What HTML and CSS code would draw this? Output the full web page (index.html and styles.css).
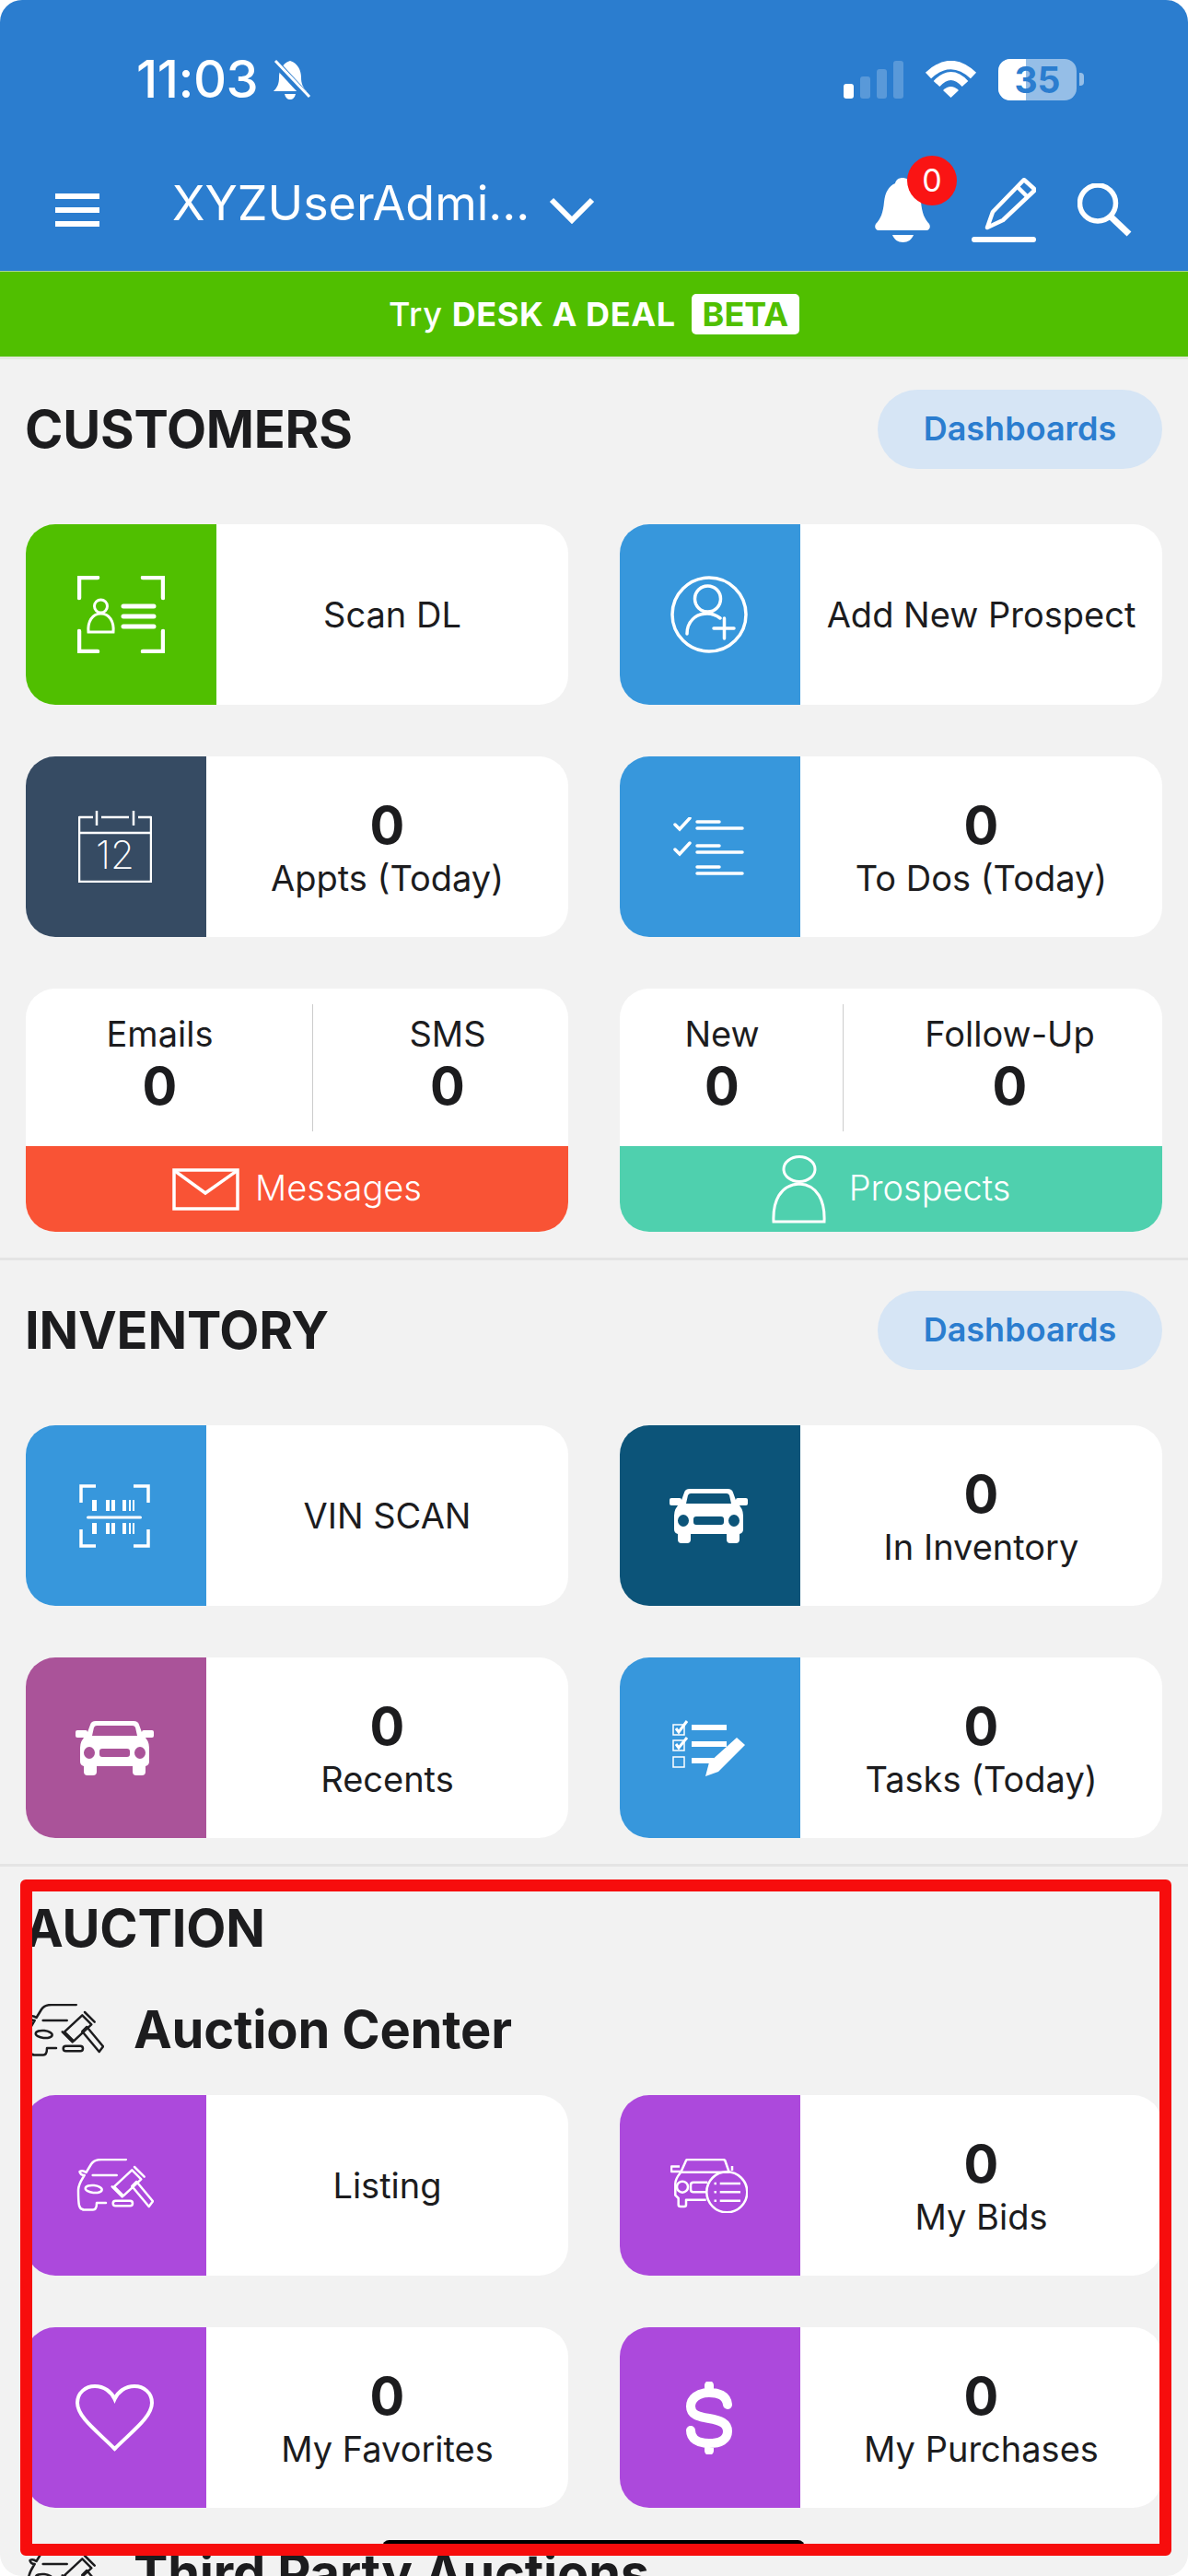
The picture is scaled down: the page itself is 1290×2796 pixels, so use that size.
FILE: index.html
```html
<!DOCTYPE html>
<html>
<head>
 <title>Dealer Home</title>
 <meta charset="utf-8">
 <link rel="stylesheet" href="styles.css">
</head>
<body>
<svg class="defs" width="0" height="0">
	<symbol id="car" viewBox="0 0 85 59">
		<rect x="0" y="10" width="13" height="8" rx="2"/>
		<rect x="72" y="10" width="13" height="8" rx="2"/>
		<path fill-rule="evenodd" d="M22 0H63Q68 0 69 4L73 15Q80 21 80 29V44Q80 48 76 49V55Q76 59 72 59H66Q62 59 62 55V49H23V55Q23 59 19 59H13Q9 59 9 55V49Q5 48 5 44V29Q5 21 12 15L16 4Q17 0 22 0ZM23 5Q21 5 20 7L18 16H67L65 7Q64 5 62 5ZM15 28A6 6.500 0 1 0 15 41A6 6.500 0 1 0 15 28ZM70 28A6 6.500 0 1 0 70 41A6 6.500 0 1 0 70 28ZM29 30Q26 30 26 33V36Q26 39 29 39H56Q59 39 59 36V33Q59 30 56 30Z"/>
	</symbol>
	<symbol id="gavel-car" viewBox="0 0 85 58">
		<g fill="none" stroke="currentColor" stroke-width="2.500" stroke-linejoin="round" stroke-linecap="round">
			<path d="M54.700 1H28C22 1 19 3 17 6L11.500 15C9 13 6 13 4.500 14C5 17 7 18 9.700 18C6 24 3 28 3 34C3 41 3 47 4 51C5 54 7 55 8 55V55.500H19C22 55.500 23 53 23 48H33"/>
			<path d="M18.700 18H44.700"/>
			<ellipse cx="19.700" cy="33" rx="9" ry="4" transform="rotate(6 19.700 33)"/>
			<rect x="40.700" y="45.700" width="21.300" height="5.600" rx="2.800"/>
			<path d="M61.300 12.300L71.300 22.300L52 40.300L42 30.300Z"/>
			<path d="M64 9L74.700 19.700M39.700 30.300L50.700 41.300"/>
			<path d="M61.300 30L66.300 25L84 46.300L79.700 52Z"/>
		</g>
	</symbol>
</svg>

<div class="screen">

<div class="topbar">
	<div class="status_row">
		<span class="clock">11:03</span>
		<svg class="bell_off" width="44" height="44" viewBox="0 0 44 44">
			<path fill="#fff" d="M21 2C12 5 9 13 9 20C9 27 7 31 3 35H39C35 31 33 27 33 20C33 13 30 5 21 2ZM15 38H27C26 42 24 44 21 44C18 44 16 42 15 38Z"/>
			<path d="M4 3L40 42" stroke="#2B7DCF" stroke-width="8"/>
			<path d="M5 2L42 41" stroke="#fff" stroke-width="3"/>
		</svg>
		<div class="status_icons">
			<svg width="65" height="41" viewBox="0 0 65 41">
				<rect x="0" y="25" width="11" height="16" rx="3" fill="#fff"/>
				<rect x="18" y="17" width="11" height="24" rx="3" fill="#fff" opacity=".22"/>
				<rect x="36" y="9" width="11" height="32" rx="3" fill="#fff" opacity=".22"/>
				<rect x="54" y="0" width="11" height="41" rx="3" fill="#fff" opacity=".22"/>
			</svg>
			<svg width="57" height="40" viewBox="0 0 57 40">
				<g fill="none" stroke="#fff" stroke-width="9">
					<path d="M4 16Q28.500 -7 53 16"/>
					<path d="M13 25Q28.500 8 44 25"/>
				</g>
				<path fill="#fff" d="M28.500 40L20 32Q28.500 24 37 32Z"/>
			</svg>
			<div class="battery"><span class="battery_fill"></span><span class="battery_num">35</span></div>
		</div>
	</div>
	<div class="nav_row">
		<div class="burger"><span></span><span></span><span></span></div>
		<span class="account">XYZUserAdmi...</span>
		<svg class="chevron" width="50" height="29" viewBox="0 0 50 29"><path d="M3 3L25 25L47 3" fill="none" stroke="#fff" stroke-width="6"/></svg>
		<div class="nav_icons">
			<div class="notify">
				<svg width="60" height="70" viewBox="0 0 60 70">
					<path fill="#fff" d="M30 0C34 0 37 2 38 6C45 9 49 16 50 26C51 38 54 45 59 50C61 54 59 57 56 57H4C1 57 -1 54 1 50C6 45 9 38 10 26C11 16 15 9 22 6C23 2 26 0 30 0ZM19 62H42C40 67 36 70 30.500 70C25 70 21 67 19 62Z"/>
				</svg>
				<span class="badge">0</span>
			</div>
			<svg width="70" height="70" viewBox="0 0 70 70">
				<g fill="none" stroke="#fff" stroke-width="4.500" stroke-linejoin="round">
					<path d="M58 3L68 12Q69 13 68 14L34 46L17 54L23 37L56 3Q57 2 58 3Z"/>
					<path d="M50 10L62 22"/>
				</g>
				<rect x="0" y="64" width="70" height="6" rx="3" fill="#fff"/>
			</svg>
			<svg width="60" height="58" viewBox="0 0 60 58">
				<circle cx="22" cy="21.500" r="19.500" fill="none" stroke="#fff" stroke-width="5.500"/>
				<path d="M37 37L56 55" stroke="#fff" stroke-width="7"/>
			</svg>
		</div>
	</div>
</div>

<div class="promo">
	<span class="promo_text">Try <b>DESK A DEAL</b></span>
	<span class="promo_tag">BETA</span>
</div>

<div class="section">
	<div class="section_head">
		<h2 class="section_title">CUSTOMERS</h2>
		<span class="pill">Dashboards</span>
	</div>
	<div class="tiles">
		<div class="tile">
			<div class="tile_icon bg_green wide">
				<svg width="95" height="84" viewBox="0 0 95 84">
					<g fill="none" stroke="#fff" stroke-width="4.500" stroke-linecap="round">
						<path d="M2 24V2H22M71 2H93V24M2 60V82H22M71 82H93V60"/>
						<path d="M50 33H83M50 44H83M50 55H83" stroke-width="5"/>
					</g>
					<g fill="none" stroke="#fff" stroke-width="3">
						<circle cx="25.500" cy="33" r="7"/>
						<path d="M12 61H39C40 50 35 41 25.500 41C16 41 11 50 12 61Z"/>
					</g>
				</svg>
			</div>
			<div class="tile_body solo"><span class="label">Scan DL</span></div>
		</div>
		<div class="tile">
			<div class="tile_icon bg_blue">
				<svg width="84" height="84" viewBox="0 0 84 84">
					<g fill="none" stroke="#fff" stroke-width="3.500" stroke-linecap="round">
						<circle cx="42" cy="42" r="40"/>
						<circle cx="40.500" cy="25" r="14"/>
						<path d="M18 63C18 50 27 41 40 41C46 41 50 43 54 46"/>
						<path d="M47 57H69M58.500 46V68"/>
					</g>
				</svg>
			</div>
			<div class="tile_body solo"><span class="label">Add New Prospect</span></div>
		</div>
		<div class="tile">
			<div class="tile_icon bg_slate">
				<svg width="80" height="78" viewBox="0 0 80 78">
					<g fill="none" stroke="#fff" stroke-width="2.500" stroke-linejoin="round">
						<path d="M16 7H1V77H79V7H65"/>
						<path d="M1 24H79M25 7H55M20 0V16M60 0V16"/>
					</g>
					<text class="cal_day" x="40" y="63" text-anchor="middle">12</text>
				</svg>
			</div>
			<div class="tile_body"><b class="count">0</b><span class="label">Appts (Today)</span></div>
		</div>
		<div class="tile">
			<div class="tile_icon bg_blue">
				<svg width="77" height="64" viewBox="0 0 77 64">
					<g fill="none" stroke="#fff" stroke-width="3.500" stroke-linecap="round">
						<path d="M2 8L7 13L18 1M2 35L7 40L18 28"/>
						<path d="M26 5H50M26 12H75M26 31H50M26 38H75M26 54H50M26 61H75"/>
					</g>
				</svg>
			</div>
			<div class="tile_body"><b class="count">0</b><span class="label">To Dos (Today)</span></div>
		</div>
		<div class="stat_card">
			<div class="stat_top split_msg">
				<div class="stat_cell"><span class="label">Emails</span><b class="count">0</b></div>
				<div class="stat_cell"><span class="label">SMS</span><b class="count">0</b></div>
			</div>
			<div class="stat_foot bg_coral gap_msg">
				<svg width="73" height="46" viewBox="0 0 73 46">
					<g fill="none" stroke="#fff" stroke-width="3.500">
						<rect x="2" y="2" width="69" height="42"/>
						<path d="M3 3L36 27L70 3"/>
					</g>
				</svg>
				<span class="foot_text">Messages</span>
			</div>
		</div>
		<div class="stat_card">
			<div class="stat_top split_pro">
				<div class="stat_cell"><span class="label">New</span><b class="count">0</b></div>
				<div class="stat_cell"><span class="label">Follow-Up</span><b class="count">0</b></div>
			</div>
			<div class="stat_foot bg_mint gap_pro">
				<svg width="59" height="74" viewBox="0 0 59 74">
					<g fill="none" stroke="#fff" stroke-width="3">
						<ellipse cx="30" cy="15" rx="17" ry="13.500"/>
						<path d="M2 72C1 50 9 32 30 31C50 32 58 50 57 72Z"/>
					</g>
				</svg>
				<span class="foot_text">Prospects</span>
			</div>
		</div>
	</div>
</div>

<div class="section">
	<div class="section_head">
		<h2 class="section_title">INVENTORY</h2>
		<span class="pill">Dashboards</span>
	</div>
	<div class="tiles">
		<div class="tile">
			<div class="tile_icon bg_blue">
				<svg width="77" height="69" viewBox="0 0 77 69" fill="#fff">
					<path fill="none" stroke="#fff" stroke-width="3.500" d="M2 20V2H18M59 2H75V20M2 49V67H18M59 67H75V49"/>
					<rect x="8" y="34.500" width="60" height="3" rx="1.500"/>
					<g>
						<rect x="14" y="17" width="5" height="12"/>
						<rect x="29" y="17" width="4" height="12"/>
						<rect x="35" y="17" width="4" height="12"/>
						<rect x="47" y="17" width="4" height="12"/>
						<rect x="54" y="17" width="2" height="12"/>
						<rect x="58" y="17" width="2" height="12"/>
						<rect x="14" y="42" width="5" height="12"/>
						<rect x="29" y="42" width="4" height="12"/>
						<rect x="35" y="42" width="4" height="12"/>
						<rect x="47" y="42" width="4" height="12"/>
						<rect x="54" y="42" width="2" height="12"/>
						<rect x="58" y="42" width="2" height="12"/>
					</g>
				</svg>
			</div>
			<div class="tile_body solo"><span class="label">VIN SCAN</span></div>
		</div>
		<div class="tile">
			<div class="tile_icon bg_teal">
				<svg class="solid" width="85" height="59"><use href="#car"/></svg>
			</div>
			<div class="tile_body"><b class="count">0</b><span class="label">In Inventory</span></div>
		</div>
		<div class="tile">
			<div class="tile_icon bg_plum">
				<svg class="solid" width="85" height="59"><use href="#car"/></svg>
			</div>
			<div class="tile_body"><b class="count">0</b><span class="label">Recents</span></div>
		</div>
		<div class="tile">
			<div class="tile_icon bg_blue">
				<svg width="79" height="61" viewBox="0 0 79 61">
					<g fill="none" stroke="#fff" stroke-width="1.500">
						<rect x="1" y="5" width="12" height="11"/>
						<rect x="1" y="22" width="12" height="11"/>
						<rect x="1" y="40" width="12" height="11"/>
					</g>
					<path d="M4 9L7 13L16 1M4 26L7 30L16 19" fill="none" stroke="#fff" stroke-width="3"/>
					<rect x="21" y="5" width="38" height="6" fill="#fff"/>
					<rect x="21" y="23" width="38" height="6" fill="#fff"/>
					<rect x="21" y="41" width="24" height="6" fill="#fff"/>
					<path fill="#fff" d="M70 19L79 27L50 56L36 61L40 46Z"/>
				</svg>
			</div>
			<div class="tile_body"><b class="count">0</b><span class="label">Tasks (Today)</span></div>
		</div>
	</div>
</div>

<div class="auction">
	<h2 class="section_title auction_title">AUCTION</h2>
	<div class="sub_head">
		<svg class="sub_icon" width="85" height="58"><use href="#gavel-car"/></svg>
		<h3 class="sub_title">Auction Center</h3>
	</div>
	<div class="tiles">
		<div class="tile">
			<div class="tile_icon bg_violet">
				<svg class="light" width="85" height="58"><use href="#gavel-car"/></svg>
			</div>
			<div class="tile_body solo"><span class="label">Listing</span></div>
		</div>
		<div class="tile">
			<div class="tile_icon bg_violet">
				<svg width="84" height="59" viewBox="0 0 84 59">
					<g fill="none" stroke="#fff" stroke-width="2.500" stroke-linejoin="round">
						<path d="M11.300 14.700L17 2Q17.500 1 19 1H57Q58.500 1 59.300 2L63.700 14.700M11.300 14.700H63.700"/>
						<path d="M11 14H1V8.500H10"/>
						<path d="M67 8V13"/>
						<path d="M11.300 14.700C8 19 5.300 22 5.300 27V39.700L8.700 43V50Q8.700 52 11 52H15Q17 52 17 50V44.700H38.700"/>
						<circle cx="13" cy="30.700" r="6"/>
						<path d="M40.300 25.700H25Q22 25.700 22 28.500V33.500Q22 36.300 25 36.300H39"/>
						<circle cx="61.300" cy="36.300" r="22"/>
						<path d="M53.700 27H76M53.700 36.300H76M53.700 45.700H76"/>
						<path d="M47.500 27H50M47.500 36.300H50M47.500 45.700H50"/>
					</g>
				</svg>
			</div>
			<div class="tile_body"><b class="count">0</b><span class="label">My Bids</span></div>
		</div>
		<div class="tile">
			<div class="tile_icon bg_violet">
				<svg width="85" height="73" viewBox="0 0 85 73">
					<path d="M42.500 70C25 52 2 36 2 20C2 9 11 2 21 2C31 2 39 8 42.500 16C46 8 54 2 64 2C74 2 83 9 83 20C83 36 60 52 42.500 70Z" fill="none" stroke="#fff" stroke-width="4"/>
				</svg>
			</div>
			<div class="tile_body"><b class="count">0</b><span class="label">My Favorites</span></div>
		</div>
		<div class="tile">
			<div class="tile_icon bg_violet">
				<svg width="52" height="79" viewBox="0 0 52 79">
					<path d="M46 25C45 15 36 12 26 12C14 12 6 18 6 27C6 36 14 38 26 40C38 42 46 45 46 54C46 63 38 67 26 67C14 67 6 62 6 53M26 4V12M26 67V75" fill="none" stroke="#fff" stroke-width="10" stroke-linecap="round"/>
				</svg>
			</div>
			<div class="tile_body"><b class="count">0</b><span class="label">My Purchases</span></div>
		</div>
	</div>
	<div class="sub_head sub_next">
		<svg class="sub_icon" width="85" height="58"><use href="#gavel-car"/></svg>
		<h3 class="sub_title">Third Party Auctions</h3>
	</div>
</div>

<div class="home_bar"></div>
<div class="callout"></div>

</div>
</body>
</html>
```
FILE: styles.css
```css
html, body {
	margin: 0;
	background: #FFFFFF;
}

.defs { position: absolute; }

.screen {
	position: relative;
	width: 1290px;
	height: 2796px;
	overflow: hidden;
	border-radius: 24px;
	background: #F2F2F2;
	font-family: Inter, "Liberation Sans", sans-serif;
	color: #1C1C1E;
}

/* top bar */
.topbar {
	height: 294px;
	background: #2B7DCF;
	border-bottom: 1px solid #A9D58D;
	color: #FFFFFF;
}

.status_row {
	display: flex;
	align-items: center;
	height: 172px;
	padding: 0 121px 0 148px;
}

.clock {
	font-size: 56px;
	font-weight: 500;
	letter-spacing: -.5px;
}

.bell_off { margin-left: 14px; }

.status_icons {
	display: flex;
	align-items: center;
	gap: 23px;
	margin-left: auto;
}

.battery {
	position: relative;
	width: 85px;
	height: 45px;
	border-radius: 13px;
	background: rgba(255, 255, 255, .5);
	text-align: center;
	font-size: 39px;
	font-weight: 700;
	line-height: 45px;
	color: #2B7DCF;
}

.battery::after {
	content: "";
	position: absolute;
	left: 88px;
	top: 15px;
	width: 5px;
	height: 14px;
	border-radius: 0 4px 4px 0;
	background: rgba(255, 255, 255, .5);
}

.battery_fill {
	position: absolute;
	left: 0;
	top: 0;
	width: 30px;
	height: 45px;
	border-radius: 13px 0 0 13px;
	background: #FFFFFF;
}

.battery_num { position: relative; }

.nav_row {
	display: flex;
	align-items: center;
	height: 112px;
	padding: 0 60px 10px 60px;
}

.burger {
	display: flex;
	flex-direction: column;
	gap: 9px;
	width: 48px;
}

.burger span {
	height: 6px;
	background: #FFFFFF;
}

.account {
	margin: 0 21px 16px 79px;
	font-size: 52px;
}

.nav_icons {
	display: flex;
	align-items: center;
	gap: 45px;
	margin-left: auto;
}

.notify {
	position: relative;
	height: 70px;
}

.badge {
	position: absolute;
	left: 35px;
	top: -24px;
	width: 54px;
	height: 54px;
	border-radius: 50%;
	background: #FA1414;
	text-align: center;
	font-size: 34px;
	line-height: 54px;
}

/* promo strip */
.promo {
	display: flex;
	align-items: center;
	justify-content: center;
	gap: 17px;
	height: 92px;
	background: #50BF00;
	border-bottom: 3px solid #E3E9DE;
	color: #FFFFFF;
}

.promo_text {
	font-size: 36px;
	font-weight: 500;
	letter-spacing: .6px;
}

.promo_text b { font-weight: 700; }

.promo_tag {
	padding: 0 12px;
	height: 44px;
	line-height: 44px;
	border-radius: 5px;
	background: #FFFFFF;
	color: #50BF00;
	font-size: 36px;
	font-weight: 700;
}

/* sections */
.section {
	padding: 33px 28px 28px 28px;
	border-bottom: 3px solid #E4E4E4;
}

.section_head {
	display: flex;
	align-items: center;
	justify-content: space-between;
	height: 86px;
	margin-bottom: 60px;
}

.section_title {
	margin: 0 0 0 -1px;
	font-size: 56px;
	font-weight: 700;
	letter-spacing: -.2px;
}

.pill {
	width: 309px;
	height: 86px;
	line-height: 84px;
	border-radius: 43px;
	background: #D6E5F5;
	text-align: center;
	color: #2B7DCF;
	font-size: 36px;
	font-weight: 600;
}

.tiles {
	display: grid;
	grid-template-columns: 589px 589px;
	gap: 56px;
}

.tile {
	display: flex;
	height: 196px;
	border-radius: 32px;
	background: #FFFFFF;
	overflow: hidden;
}

.tile_icon {
	display: flex;
	align-items: center;
	justify-content: center;
	flex: 0 0 193px;
	padding-right: 3px;
}

.tile_icon.wide {
	flex-basis: 207px;
	padding-right: 0;
}

.tile_body {
	flex: 1;
	display: flex;
	flex-direction: column;
	align-items: center;
	justify-content: center;
	padding-top: 4px;
}

.tile_body.solo { padding-top: 0; }

.label {
	font-size: 38px;
	line-height: 50px;
}

.count {
	font-size: 56px;
	line-height: 64px;
	font-weight: 700;
}

.cal_day {
	font-size: 42px;
	font-weight: 200;
	fill: #FFFFFF;
	font-family: Inter, sans-serif;
}

.solid { fill: #FFFFFF; }
.light { color: #FFFFFF; }

.bg_green { background: #50BF00; }
.bg_blue { background: #3797DC; }
.bg_slate { background: #364B63; }
.bg_teal { background: #0C5479; }
.bg_plum { background: #AA5399; }
.bg_violet { background: #AC49DC; }
.bg_coral { background: #F95335; }
.bg_mint { background: #4FD0AE; }

/* stat cards */
.stat_card {
	height: 264px;
	border-radius: 32px;
	background: #FFFFFF;
	overflow: hidden;
}

.stat_top {
	display: grid;
	height: 138px;
	padding: 17px 0 16px 0;
}

.split_msg { grid-template-columns: 311px 1fr; }
.split_pro { grid-template-columns: 242px 1fr; }

.stat_cell {
	display: flex;
	flex-direction: column;
	align-items: center;
	padding: 7px 20px 0 0;
}

.stat_cell + .stat_cell {
	padding: 7px 0 0 15px;
	border-left: 1px solid #CCCCCC;
}

.stat_foot {
	display: flex;
	align-items: center;
	justify-content: center;
	height: 93px;
	color: #FFFFFF;
}

.gap_msg { gap: 17px; }
.gap_pro { gap: 25px; }

.foot_text {
	margin-bottom: 3px;
	font-size: 38px;
	font-weight: 300;
}

/* auction */
.auction {
	padding: 34px 28px 0 28px;
}

.auction_title {
	height: 68px;
	line-height: 66px;
	margin-bottom: 46px;
}

.sub_head {
	display: flex;
	align-items: center;
	gap: 32px;
	height: 60px;
	margin-bottom: 40px;
}

.sub_next { margin-top: 42px; }

.sub_icon { color: #1C1C1E; }

.sub_title {
	margin: 0 0 2px 0;
	font-size: 56px;
	font-weight: 700;
	letter-spacing: -.2px;
}

/* overlays */
.home_bar {
	position: absolute;
	left: 415px;
	top: 2757px;
	width: 459px;
	height: 15px;
	border-radius: 8px;
	background: #000000;
}

.callout {
	position: absolute;
	left: 22px;
	top: 2040px;
	width: 1250px;
	height: 734px;
	box-sizing: border-box;
	border: 13px solid #F70D0D;
	border-radius: 6px;
}
```
